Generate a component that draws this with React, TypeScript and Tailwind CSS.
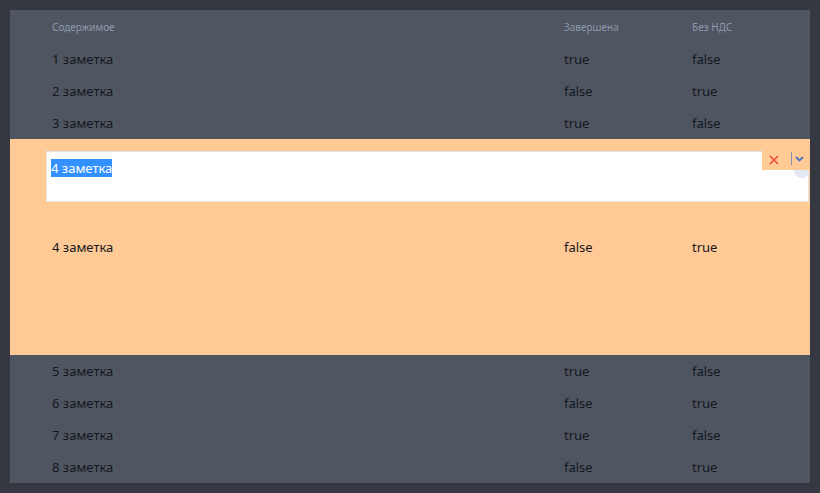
import React from "react";

const top = [
  ["1 заметка", "true", "false"],
  ["2 заметка", "false", "true"],
  ["3 заметка", "true", "false"],
];
const bottom = [
  ["5 заметка", "true", "false"],
  ["6 заметка", "false", "true"],
  ["7 заметка", "true", "false"],
  ["8 заметка", "false", "true"],
];

function Row({ r }: { r: string[] }) {
  return (
    <div className="grid grid-cols-[512px_128px_1fr] pl-[42px] pt-[2px] h-[32px] items-center text-[13px] text-[#15181d]">
      <div>{r[0]}</div>
      <div>{r[1]}</div>
      <div>{r[2]}</div>
    </div>
  );
}

export default function App() {
  return (
    <div
      className="w-[820px] h-[493px] bg-[#363841] p-[10px]"
      style={{ fontFamily: '"Noto Sans", "Open Sans", sans-serif' }}
    >
      <div className="w-[800px] h-[473px] bg-[#4f5661] flex flex-col overflow-hidden">
        <div className="grid grid-cols-[512px_128px_1fr] pl-[42px] pt-[1px] h-[33px] items-center text-[10px] text-[#8e99ab]">
          <div>Содержимое</div>
          <div>Завершена</div>
          <div>Без НДС</div>
        </div>
        {top.map((r) => (
          <Row key={r[0]} r={r} />
        ))}
        <div className="relative h-[216px] shrink-0 bg-[#ffca96] grid grid-cols-[512px_128px_1fr] pl-[42px] pt-[1px] items-center text-[13px] text-[#15181d]">
          <div>4 заметка</div>
          <div>false</div>
          <div>true</div>
          <div className="absolute left-[36px] right-[1px] top-[12px] h-[51px] bg-white border border-[#e4e4e4] pl-[4px] pt-[7px] text-[13px] leading-[18px]">
            <span className="bg-[#3390ff] text-white">4 заметка</span>
          </div>
          <div className="absolute right-0 top-[12px] w-[48px] h-[19px] bg-[#ffca96]">
            <svg className="absolute left-[7px] top-[4px]" width="10" height="10" viewBox="0 0 10 10">
              <path d="M1 1L9 9M9 1L1 9" stroke="#f04a3a" strokeWidth="1.5" />
            </svg>
            <div className="absolute left-[29px] top-[1px] w-[1px] h-[13px] bg-[#8b8db5]" />
            <svg className="absolute left-[33px] top-[5px]" width="9" height="6" viewBox="0 0 9 6">
              <path d="M1 1L4.5 4.5L8 1" stroke="#4f77c0" strokeWidth="1.8" fill="none" />
            </svg>
          </div>
          <div className="absolute right-[1px] top-[31px] w-[15px] h-[8px] bg-[#e2e9f4] rounded-b-[7px]" />
        </div>
        {bottom.map((r) => (
          <Row key={r[0]} r={r} />
        ))}
      </div>
    </div>
  );
}
